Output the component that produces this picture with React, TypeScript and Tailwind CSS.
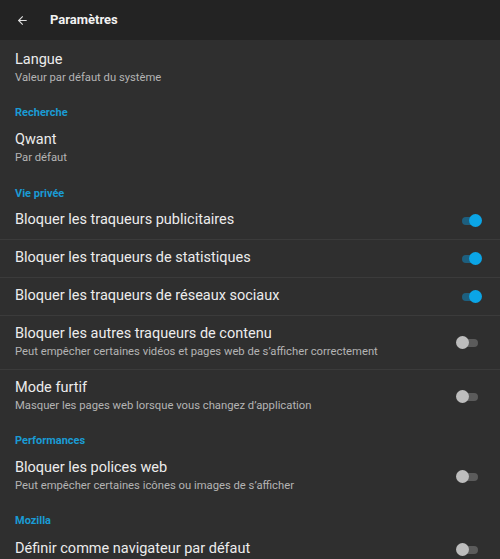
import { ArrowLeft } from 'lucide-react';

type Item = {
  title: string;
  subtitle?: string;
  toggle?: boolean;
  divider?: boolean;
  pad?: string;
  height?: string;
};

function Toggle({ on }: { on: boolean }) {
  return (
    <div className="relative w-[26px] h-[14px] mr-[2px]">
      <div
        className={
          on
            ? 'absolute left-[6px] top-[3px] w-[16px] h-[8px] rounded-full bg-[#1d5f7f]'
            : 'absolute left-[6px] top-[3px] w-[16px] h-[8px] rounded-full bg-[#5b5b5b]'
        }
      />
      <div
        className={
          on
            ? 'absolute left-[13px] top-0 w-[13px] h-[13px] rounded-full bg-[#0ba5e6]'
            : 'absolute left-0 top-0 w-[13px] h-[13px] rounded-full bg-[#bdbdbd]'
        }
      />
    </div>
  );
}

function Row({ item }: { item: Item }) {
  const twoLine = !!item.subtitle;
  const height = item.height ?? (twoLine ? 'h-[54px]' : 'h-[38px]');
  const pad = item.pad ?? 'pt-[9px]';
  return (
    <div
      className={
        height +
        ' ' +
        pad +
        (item.divider ? ' border-b border-[#3b3b3b]' : '') +
        ' flex items-start justify-between pl-[15px] pr-[16px]'
      }
    >
      <div className="flex flex-col">
        <span className="text-[14.5px] leading-[18px] text-[#ececec]">{item.title}</span>
        {item.subtitle && (
          <span className="text-[11.25px] leading-[17px] text-[#b4b4b4]">{item.subtitle}</span>
        )}
      </div>
      {item.toggle !== undefined && (
        <div className={twoLine ? 'pt-[11px]' : 'pt-[3px]'}>
          <Toggle on={item.toggle} />
        </div>
      )}
    </div>
  );
}

function SectionTitle({ label }: { label: string }) {
  return (
    <div className="h-[27px] pt-[11px] pl-[15px]">
      <span className="block text-[11px] leading-[15px] font-bold text-[#1a9bd4]">{label}</span>
    </div>
  );
}

export default function App() {
  return (
    <div
      className="w-[500px] h-[559px] overflow-hidden bg-[#2f2f2f]"
      style={{ fontFamily: 'Roboto, "Noto Sans", sans-serif' }}
    >
      <div className="h-[40px] bg-[#232323] flex items-center">
        <ArrowLeft className="ml-[16px] w-[13px] h-[13px] text-[#e0e0e0]" strokeWidth={2} />
        <span className="ml-[21px] text-[13px] font-bold text-[#f2f2f2]">Paramètres</span>
      </div>

      <Row item={{ title: 'Langue', subtitle: 'Valeur par défaut du système', pad: 'pt-[11px]' }} />

      <SectionTitle label="Recherche" />
      <Row item={{ title: 'Qwant', subtitle: 'Par défaut', pad: 'pt-[10px]' }} />

      <SectionTitle label="Vie privée" />
      <Row item={{ title: 'Bloquer les traqueurs publicitaires', toggle: true, divider: true }} />
      <Row item={{ title: 'Bloquer les traqueurs de statistiques', toggle: true, divider: true }} />
      <Row item={{ title: 'Bloquer les traqueurs de réseaux sociaux', toggle: true, divider: true }} />
      <Row
        item={{
          title: 'Bloquer les autres traqueurs de contenu',
          subtitle: 'Peut empêcher certaines vidéos et pages web de s’afficher correctement',
          toggle: false,
          divider: true,
        }}
      />
      <Row
        item={{
          title: 'Mode furtif',
          subtitle: 'Masquer les pages web lorsque vous changez d’application',
          toggle: false,
          height: 'h-[52px]',
        }}
      />

      <SectionTitle label="Performances" />
      <Row
        item={{
          title: 'Bloquer les polices web',
          subtitle: 'Peut empêcher certaines icônes ou images de s’afficher',
          toggle: false,
          pad: 'pt-[10px]',
          height: 'h-[53px]',
        }}
      />

      <SectionTitle label="Mozilla" />
      <Row item={{ title: 'Définir comme navigateur par défaut', toggle: false, pad: 'pt-[11px]' }} />
    </div>
  );
}
